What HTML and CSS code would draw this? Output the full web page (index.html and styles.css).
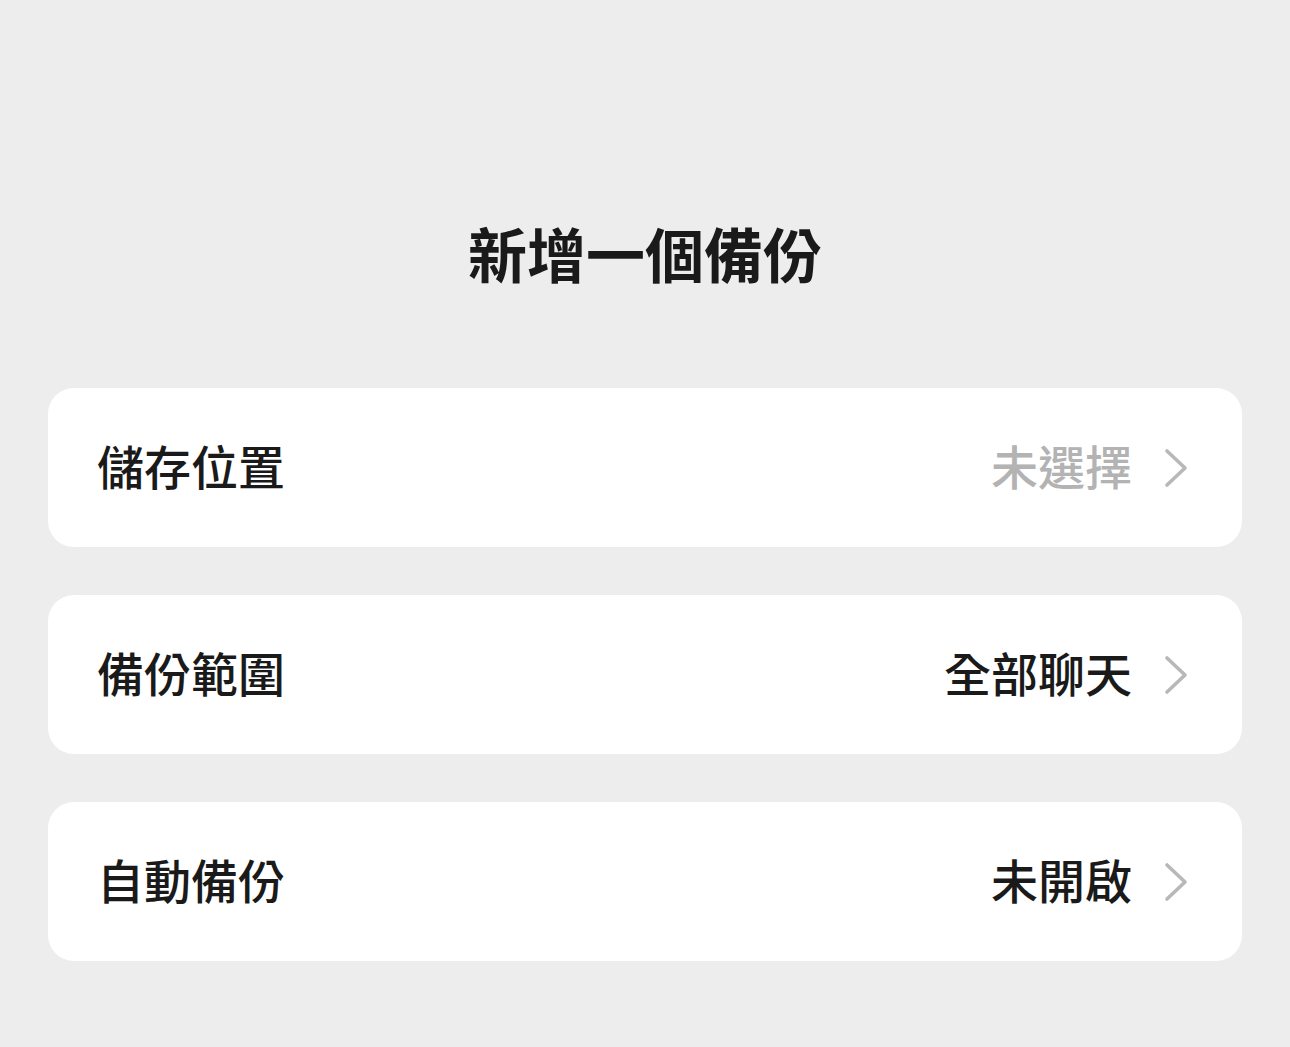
FILE: index.html
```html
<!DOCTYPE html>
<html lang="zh-Hant">
<head>
<meta charset="utf-8">
<link rel="stylesheet" href="styles.css">
</head>
<body>
<div class="page">
  <h1 class="title">新增一個備份</h1>
  <div class="list">
    <div class="card">
      <span class="label">儲存位置</span>
      <div class="right">
        <span class="value muted">未選擇</span>
        <svg class="chev" viewBox="0 0 24 40" width="24" height="40"><polyline points="3,3 21,20 3,37" fill="none" stroke="#b8b8b8" stroke-width="3.6" stroke-linecap="round" stroke-linejoin="round"/></svg>
      </div>
    </div>
    <div class="card">
      <span class="label">備份範圍</span>
      <div class="right">
        <span class="value">全部聊天</span>
        <svg class="chev" viewBox="0 0 24 40" width="24" height="40"><polyline points="3,3 21,20 3,37" fill="none" stroke="#b8b8b8" stroke-width="3.6" stroke-linecap="round" stroke-linejoin="round"/></svg>
      </div>
    </div>
    <div class="card">
      <span class="label">自動備份</span>
      <div class="right">
        <span class="value">未開啟</span>
        <svg class="chev" viewBox="0 0 24 40" width="24" height="40"><polyline points="3,3 21,20 3,37" fill="none" stroke="#b8b8b8" stroke-width="3.6" stroke-linecap="round" stroke-linejoin="round"/></svg>
      </div>
    </div>
  </div>
</div>
</body>
</html>
```
FILE: styles.css
```css
html, body {
  margin: 0;
  padding: 0;
  background: #ededed;
}
body {
  font-family: "Noto Sans CJK TC", "Noto Sans CJK SC", "Noto Sans", sans-serif;
  color: #1a1a1a;
}
.page {
  width: 1290px;
  height: 1047px;
  overflow: hidden;
}
.title {
  margin: 0;
  padding-top: 218px;
  font-size: 59px;
  line-height: 70px;
  font-weight: 700;
  text-align: center;
  color: #1a1a1a;
}
.list {
  margin: 100px 48px 0;
  display: flex;
  flex-direction: column;
  gap: 48px;
}
.card {
  height: 159px;
  box-sizing: border-box;
  background: #ffffff;
  border-radius: 26px;
  display: flex;
  align-items: center;
  justify-content: space-between;
  padding: 0 54px 0 49px;
}
.label, .value {
  font-size: 47px;
  font-weight: 500;
  line-height: 1;
  padding-bottom: 7px;
}
.right {
  display: flex;
  align-items: center;
  gap: 32px;
}
.muted {
  color: #b3b3b3;
}
.chev {
  display: block;
}
```
